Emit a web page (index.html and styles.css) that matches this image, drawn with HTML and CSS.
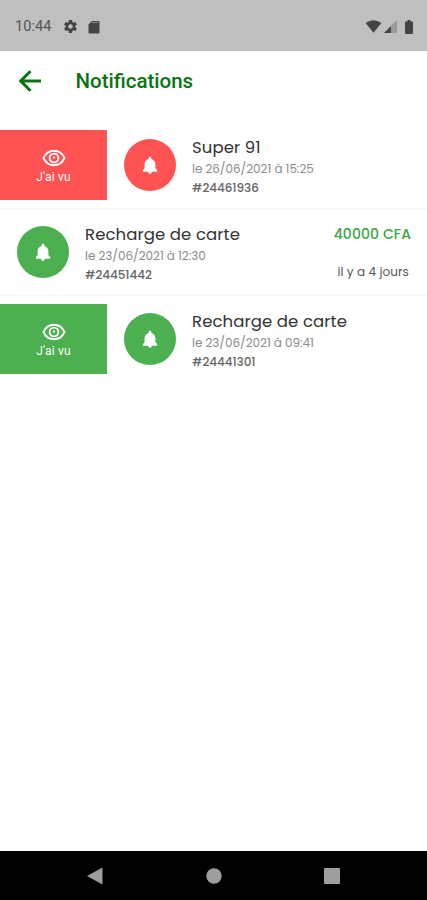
FILE: index.html
```html
<!DOCTYPE html>
<html lang="fr">
<head>
  <meta charset="UTF-8">
  <meta name="viewport" content="width=device-width, initial-scale=1.0">
  <title>Notifications</title>
  <link rel="stylesheet" href="styles.css">
</head>
<body>
  <svg class="symbols" width="0" height="0">
    <symbol id="bell" viewBox="0 0 24 24">
      <path d="M12 22.500c1.300 0 2.200-.9 2.200-2.500H9.800c0 1.600.9 2.500 2.200 2.500zM18.500 16v-5c0-3.070-2-5.640-4.800-6.320V4c0-1-.8-1.800-1.700-1.800s-1.700.8-1.700 1.800v.68C7.500 5.360 5.500 7.920 5.500 11v5l-2 2v2h17v-2z"/>
    </symbol>
    <symbol id="eye" viewBox="0 0 24 18">
      <path d="M1.500 9C3.600 4.300 7.400 1.700 12 1.700S20.400 4.300 22.500 9C20.400 13.700 16.600 16.300 12 16.300S3.600 13.700 1.500 9z"/>
      <circle cx="12" cy="9" r="4.400"/>
      <path d="M12 7.500v2"/>
    </symbol>
  </svg>

  <div class="status-bar">
    <span class="clock">10:44</span>
    <svg class="gear" viewBox="2 2 20 20"><path d="M19.430 12.980c.04-.32.070-.64.070-.98s-.03-.66-.07-.98l2.110-1.650c.19-.15.240-.42.120-.64l-2-3.460c-.12-.22-.39-.3-.61-.22l-2.490 1c-.52-.4-1.080-.73-1.690-.98l-.38-2.650C14.460 2.180 14.250 2 14 2h-4c-.25 0-.46.180-.49.420l-.38 2.650c-.61.250-1.170.590-1.690.980l-2.490-1c-.23-.09-.49 0-.61.220l-2 3.460c-.13.220-.07.490.120.640l2.110 1.650c-.04.320-.07.650-.07.980s.03.660.07.980l-2.110 1.650c-.19.150-.24.420-.12.640l2 3.460c.12.220.390.300.610.220l2.490-1c.52.400 1.080.730 1.690.980l.38 2.650c.03.240.240.420.490.420h4c.25 0 .46-.18.490-.42l.38-2.650c.61-.25 1.170-.59 1.690-.98l2.490 1c.23.090.490 0 .61-.22l2-3.460c.12-.22.070-.49-.12-.64l-2.110-1.650zM12 15.500a3.500 3.500 0 1 1 0-7 3.500 3.500 0 0 1 0 7z"/></svg>
    <svg class="sd-card" viewBox="0 0 12 14"><path d="M4 1h6.500q1 0 1 1v10.500q0 1-1 1h-9q-1 0-1-1V4.500z"/><path class="pins" d="M4 2.500h6"/></svg>
    <svg class="wifi" viewBox="0 0 18 14"><path d="M.5 3.200Q9-2.600 17.500 3.200L9 13.800z"/></svg>
    <svg class="signal" viewBox="0 0 13 13"><path class="faint" d="M13 0v13H0z"/><path d="M7 6v7H0z"/></svg>
    <svg class="battery" viewBox="0 0 8 14"><path d="M2.500 0h3v1.500H7q1 0 1 1V13q0 1-1 1H1q-1 0-1-1V2.500q0-1 1-1h1.500z"/></svg>
  </div>

  <header class="app-bar">
    <svg class="back" viewBox="0 0 22 22"><path d="M22 11H2M11.500 1.200L1.700 11l9.800 9.800"/></svg>
    <h1>Notifications</h1>
  </header>

  <main class="list">
    <div class="row red">
      <div class="seen"><svg><use href="#eye"/></svg><span>J'ai vu</span></div>
      <div class="avatar"><svg><use href="#bell"/></svg></div>
      <div class="info">
        <div class="title">Super 91</div>
        <div class="date">le 26/06/2021 à 15:25</div>
        <div class="ref">#24461936</div>
      </div>
    </div>
    <div class="row green">
      <div class="avatar"><svg><use href="#bell"/></svg></div>
      <div class="info">
        <div class="title">Recharge de carte</div>
        <div class="date">le 23/06/2021 à 12:30</div>
        <div class="ref">#24451442</div>
      </div>
      <div class="side">
        <div class="amount">40000 CFA</div>
        <div class="ago">il y a 4 jours</div>
      </div>
    </div>
    <div class="row green">
      <div class="seen"><svg><use href="#eye"/></svg><span>J'ai vu</span></div>
      <div class="avatar"><svg><use href="#bell"/></svg></div>
      <div class="info">
        <div class="title">Recharge de carte</div>
        <div class="date">le 23/06/2021 à 09:41</div>
        <div class="ref">#24441301</div>
      </div>
    </div>
  </main>

  <nav class="nav-bar">
    <svg viewBox="0 0 18 18"><path d="M16.500.5v17L1 9z"/></svg>
    <svg viewBox="0 0 18 18"><circle cx="9" cy="9" r="7.700"/></svg>
    <svg viewBox="0 0 18 18"><rect x="1" y="1" width="16" height="16" rx="1"/></svg>
  </nav>
</body>
</html>
```
FILE: styles.css
```css
* {
  box-sizing: border-box;
}
body {
  margin: 0;
  height: 900px;
  display: flex;
  flex-direction: column;
  background: #fff;
  font-family: Poppins, Inter, sans-serif;
  overflow: hidden;
}
svg {
  display: block;
  flex: none;
}
.symbols {
  position: absolute;
}
.status-bar {
  height: 51px;
  padding: 2px 14px 0 15px;
  display: flex;
  align-items: center;
  background: #bfbfbf;
  color: #555;
  fill: #444;
}
.clock {
  width: 49px;
  font: 14.5px Roboto, sans-serif;
  letter-spacing: 0.1px;
}
.gear {
  width: 13px;
  height: 13px;
}
.sd-card {
  width: 12px;
  height: 14px;
  margin-left: 11px;
}
.pins {
  stroke: #888;
  stroke-width: 1;
}
.wifi {
  width: 17px;
  height: 13px;
  margin-left: auto;
}
.signal {
  width: 13px;
  height: 13px;
  margin-left: 2px;
}
.faint {
  fill: #999;
}
.battery {
  width: 8px;
  height: 14px;
  margin-left: 8px;
}
.app-bar {
  height: 60px;
  margin-bottom: 11px;
  padding-left: 18.5px;
  display: flex;
  align-items: center;
}
.back {
  width: 22px;
  height: 22px;
  fill: none;
  stroke: #0a7412;
  stroke-width: 3;
}
.app-bar h1 {
  margin: 0 0 0 35px;
  font: 500 20.5px Roboto, sans-serif;
  color: #0a7412;
}
.list {
  flex: 1;
}
.row {
  height: 87px;
  display: flex;
  align-items: center;
  border-bottom: 1px solid #f8f8f8;
}
.row:last-child {
  border-color: #fcfcfc;
}
.seen {
  width: 107px;
  height: 70px;
  padding-top: 4px;
  display: flex;
  flex-direction: column;
  align-items: center;
  justify-content: center;
  gap: 3px;
  color: #fff;
  font: 12px/15px Roboto, sans-serif;
  letter-spacing: 0.2px;
}
.seen svg {
  width: 24px;
  height: 18px;
  fill: none;
  stroke: #fff;
  stroke-width: 1.9;
}
.avatar {
  width: 52px;
  height: 52px;
  margin: 0 16px 0 17px;
  border-radius: 50%;
  display: flex;
  align-items: center;
  justify-content: center;
}
.avatar svg {
  width: 20px;
  height: 20px;
  fill: #fff;
}
.red .seen,
.red .avatar {
  background: #ff5252;
}
.green .seen,
.green .avatar {
  background: #4caf50;
}
.info {
  padding-top: 3px;
}
.title {
  font-size: 16.5px;
  line-height: 22px;
  letter-spacing: 0.1px;
  color: #333;
}
.date {
  font-size: 12px;
  line-height: 20px;
  letter-spacing: -0.05px;
  color: #8c8c8c;
}
.ref {
  font-size: 12px;
  line-height: 18px;
  font-weight: 500;
  letter-spacing: -0.05px;
  color: #666;
}
.side {
  margin-left: auto;
  padding: 1px 16px 0 0;
  text-align: right;
}
.amount {
  font-size: 14px;
  line-height: 22px;
  font-weight: 500;
  letter-spacing: 0.1px;
  color: #3ca544;
}
.ago {
  margin-top: 17px;
  padding-right: 2px;
  font-size: 12px;
  line-height: 20px;
  letter-spacing: 0.1px;
  color: #555;
}
.nav-bar {
  height: 49px;
  padding: 0 86px;
  display: flex;
  align-items: center;
  justify-content: space-between;
  background: #000;
}
.nav-bar svg {
  width: 18px;
  height: 18px;
  fill: #9e9e9e;
}
```
